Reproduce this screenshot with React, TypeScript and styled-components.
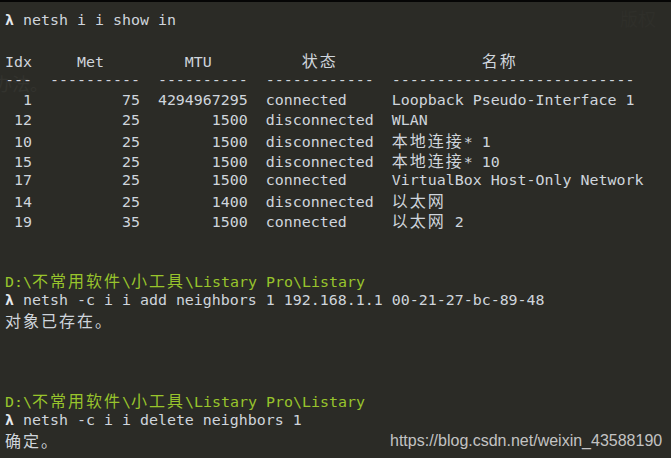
import React from "react";
import styled, { createGlobalStyle } from "styled-components";

const Global = createGlobalStyle`
  html, body {
    margin: 0;
    padding: 0;
    background: #2b2b26;
  }
`;

const Screen = styled.div`
  position: relative;
  display: flex;
  flex-direction: column;
  width: 671px;
  height: 458px;
  box-sizing: border-box;
  overflow: hidden;
  background: #2b2b26;
  border-top: 2px solid #050505;
  padding: 8px 0 0 5px;
  font-family: "DejaVu Sans Mono", "Liberation Mono", monospace;
  font-size: 14.95px;
`;

const Line = styled.div<{ $tone?: "text" | "path" }>`
  flex: 0 0 20px;
  height: 20px;
  line-height: 20px;
  white-space: pre;
  color: ${(p) => (p.$tone === "path" ? "#98c42c" : "#cfd5dc")};
`;

const Wide = styled.span`
  font-family: "Noto Sans CJK SC", "Noto Sans", sans-serif;
  font-size: 16px;
  letter-spacing: 2px;
`;

const Prompt = styled.span`
  font-weight: bold;
  color: #e4e8ec;
`;

const Ghost = styled.div<{ $shade: string; $x: number; $y: number }>`
  position: absolute;
  left: ${(p) => p.$x}px;
  top: ${(p) => p.$y}px;
  font-family: "Noto Sans CJK SC", sans-serif;
  font-size: 18px;
  line-height: 18px;
  color: ${(p) => p.$shade};
  pointer-events: none;
`;

const Watermark = styled.div`
  position: absolute;
  top: 430px;
  left: 390px;
  font-family: "Liberation Sans", Arial, sans-serif;
  font-size: 16px;
  line-height: 18px;
  color: #c3c3c3;
  white-space: nowrap;
`;

const CJK = /([\u3000-\u303f\u4e00-\u9fff\uff00-\uffef]+)/;

function render(s: string) {
  return s.split(CJK).map((part, i) => {
    if (CJK.test(part)) return <Wide key={i}>{part}</Wide>;
    if (part.startsWith("λ")) {
      return (
        <React.Fragment key={i}>
          <Prompt>λ</Prompt>
          {part.slice(1)}
        </React.Fragment>
      );
    }
    return <React.Fragment key={i}>{part}</React.Fragment>;
  });
}

const padL = (v: string | number, n: number) => String(v).padStart(n, " ");
const padR = (v: string, n: number) => v.padEnd(n, " ");

const rows: [number, number, number, string, string][] = [
  [1, 75, 4294967295, "connected", "Loopback Pseudo-Interface 1"],
  [12, 25, 1500, "disconnected", "WLAN"],
  [10, 25, 1500, "disconnected", "本地连接* 1"],
  [15, 25, 1500, "disconnected", "本地连接* 10"],
  [17, 25, 1500, "connected", "VirtualBox Host-Only Network"],
  [14, 25, 1400, "disconnected", "以太网"],
  [19, 35, 1500, "connected", "以太网 2"],
];

type L = { text: string; tone?: "text" | "path" };

const path = "D:\\不常用软件\\小工具\\Listary Pro\\Listary";

const lines: L[] = [
  { text: "λ netsh i i show in" },
  { text: "" },
  { text: "Idx     Met         MTU          状态                名称" },
  { text: "---  ----------  ----------  ------------  ---------------------------" },
  ...rows.map(([idx, met, mtu, st, name]) => ({
    text: `${padL(idx, 3)}  ${padL(met, 10)}  ${padL(mtu, 10)}  ${padR(st, 12)}  ${name}`,
  })),
  { text: "" },
  { text: "" },
  { text: path, tone: "path" },
  { text: "λ netsh -c i i add neighbors 1 192.168.1.1 00-21-27-bc-89-48" },
  { text: "对象已存在。" },
  { text: "" },
  { text: "" },
  { text: "" },
  { text: path, tone: "path" },
  { text: "λ netsh -c i i delete neighbors 1" },
  { text: "确定。" },
];

export default function App() {
  return (
    <>
      <Global />
      <Screen>
        <Ghost $shade="#33332e" $x={-6} $y={72}>办法。</Ghost>
        <Ghost $shade="#2f2f2a" $x={620} $y={7}>版权</Ghost>
        {lines.map((l, i) => (
          <Line key={i} $tone={l.tone}>
            {render(l.text)}
          </Line>
        ))}
        <Watermark>https://blog.csdn.net/weixin_43588190</Watermark>
      </Screen>
    </>
  );
}
